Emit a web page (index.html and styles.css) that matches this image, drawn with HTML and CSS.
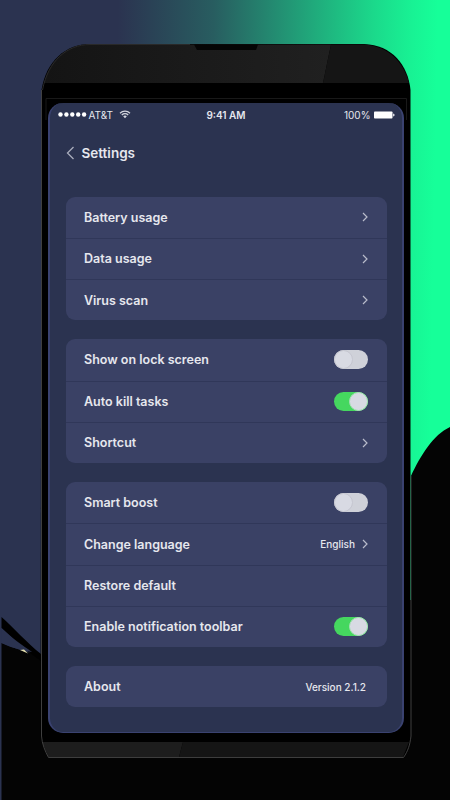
FILE: index.html
```html
<!DOCTYPE html>
<html lang="en">
  <head>
    <meta charset="utf-8" />
    <title>Settings</title>
    <link rel="stylesheet" href="styles.css" />
  </head>
  <body>
    <div class="stage">
      <!-- backdrop and phone body -->
      <svg class="backdrop" width="450" height="800" viewBox="0 0 450 800">
        <defs>
          <linearGradient id="glow" gradientUnits="userSpaceOnUse" x1="118" y1="0" x2="438" y2="6">
            <stop offset="0" stop-color="#2b3350" />
            <stop offset="0.3" stop-color="#285d60" />
            <stop offset="0.5" stop-color="#238e72" />
            <stop offset="0.8" stop-color="#1bd98b" />
            <stop offset="0.92" stop-color="#18f294" />
            <stop offset="1" stop-color="#16ff99" />
          </linearGradient>
          <linearGradient id="top" gradientUnits="userSpaceOnUse" x1="42" y1="0" x2="330" y2="0">
            <stop offset="0" stop-color="#141414" />
            <stop offset="1" stop-color="#202020" />
          </linearGradient>
        </defs>
        <rect width="450" height="800" fill="url(#glow)" />
        <path d="M1.5 643C14 648 28 653 41 655V600H411V476C421 455 433 435 450 427V800H1.5Z" fill="#040404" />
        <path d="M1.5 617C13 627 27 643 41 654V661C26 651 12 638 1.5 628Z" fill="#000" />
        <path d="M1.5 628C12 638 22 645 32 652L22 650C14 648 7 646 1.5 643Z" fill="#2b3350" />
        <path d="M20 650L28 653.5L24 649.5Z" fill="#e6e2b0" />
        <path d="M41.5 90C46 61 66 44 90 44H364C392 45 408 65 410.500 90V736C410 745 407 751 403 757.500H48.500C45 751 41.500 744 40.500 736Z" fill="#000" />
        <path d="M44 83C50 58 68 44.500 90 44.500H331L323 83Z" fill="url(#top)" />
        <path d="M331 44.500H364C389 46 404 63 409 83H323Z" fill="#151515" />
        <path d="M323 83H331L331 44.500L320 98H310Z" fill="#0c0c0c" opacity="0" />
        <path d="M46 120V98.500H406.500V120" fill="none" stroke="#191919" />
        <path d="M194 44.500H258L256 50H197Z" fill="#050505" />
        <path d="M42 742H183L179 757H48.500Z" fill="#1d1d1d" />
        <path d="M183 742H409L403 757H179Z" fill="#151515" />
        <path d="M41.500 90V736C42 744 45 751 48.500 757.500H403.500C408 751 410 745 411 736V476" fill="none" stroke="#454545" stroke-width="0.900" />
        <path d="M42.500 90C48 61 67 44.500 90 44.500H190" fill="none" stroke="#292929" />
      </svg>

      <main class="screen">
        <header class="status">
          <div class="carrier">
            <svg width="29" height="5" viewBox="0 0 29 5" fill="#fff">
              <circle cx="2.500" cy="2.500" r="2.200" />
              <circle cx="8.400" cy="2.500" r="2.200" />
              <circle cx="14.300" cy="2.500" r="2.200" />
              <circle cx="20.200" cy="2.500" r="2.200" />
              <circle cx="26.100" cy="2.500" r="2.200" />
            </svg>
            <span class="network">AT&amp;T</span>
            <svg class="wifi" width="12" height="9" viewBox="0 0 12 9" fill="none" stroke="#d4d6df" stroke-width="1.300">
              <path d="M1 3.200C3.800 0.500 8.200 0.500 11 3.200M2.800 5C4.600 3.300 7.400 3.300 9.200 5" />
              <path d="M6 8.200L4.200 6.200C5.200 5.300 6.800 5.300 7.800 6.200Z" fill="#d4d6df" stroke="none" />
            </svg>
          </div>
          <span class="clock">9:41 AM</span>
          <div class="power">
            <span>100%</span>
            <svg width="21" height="8" viewBox="0 0 21 8" fill="#fff">
              <rect x="0" y="0.500" width="18.500" height="7" rx="0.800" />
              <path d="M19.200 2.500C21 3 21 5 19.200 5.500Z" />
            </svg>
          </div>
        </header>

        <div class="title">
          <svg width="9" height="14" viewBox="0 0 9 14"><path d="M7.500 1L1.500 7L7.500 13" /></svg>
          <h1>Settings</h1>
        </div>

        <section class="card">
          <div class="row">
            <span class="label">Battery usage</span>
            <svg class="arrow" width="6" height="10" viewBox="0 0 6 10"><path d="M1 1L5 5L1 9" /></svg>
          </div>
          <div class="row">
            <span class="label">Data usage</span>
            <svg class="arrow" width="6" height="10" viewBox="0 0 6 10"><path d="M1 1L5 5L1 9" /></svg>
          </div>
          <div class="row low">
            <span class="label">Virus scan</span>
            <svg class="arrow" width="6" height="10" viewBox="0 0 6 10"><path d="M1 1L5 5L1 9" /></svg>
          </div>
        </section>

        <section class="card">
          <div class="row">
            <span class="label">Show on lock screen</span>
            <span class="toggle"></span>
          </div>
          <div class="row">
            <span class="label">Auto kill tasks</span>
            <span class="toggle on"></span>
          </div>
          <div class="row">
            <span class="label">Shortcut</span>
            <svg class="arrow" width="6" height="10" viewBox="0 0 6 10"><path d="M1 1L5 5L1 9" /></svg>
          </div>
        </section>

        <section class="card">
          <div class="row">
            <span class="label">Smart boost</span>
            <span class="toggle"></span>
          </div>
          <div class="row">
            <span class="label">Change language</span>
            <span class="value">English</span>
            <svg class="arrow" width="6" height="10" viewBox="0 0 6 10"><path d="M1 1L5 5L1 9" /></svg>
          </div>
          <div class="row">
            <span class="label">Restore default</span>
          </div>
          <div class="row">
            <span class="label">Enable notification toolbar</span>
            <span class="toggle on"></span>
          </div>
        </section>

        <section class="card">
          <div class="row">
            <span class="label">About</span>
            <span class="value version">Version 2.1.2</span>
          </div>
        </section>
      </main>
    </div>
  </body>
</html>
```
FILE: styles.css
```css
body {
  margin: 0;
  background: #2b3350;
  font-family: Inter, "Liberation Sans", sans-serif;
  color: #e6e7ee;
}

.stage {
  position: relative;
  box-sizing: border-box;
  width: 450px;
  height: 800px;
  padding: 103px 46px 67px 48px;
  overflow: hidden;
}

.backdrop {
  position: absolute;
  left: 0;
  top: 0;
}

.screen {
  position: relative;
  box-sizing: border-box;
  height: 630px;
  padding: 0 15.5px;
  border: solid #3a4270;
  border-width: 0 2px 1px 2px;
  border-radius: 15px;
  background: #2b3350;
}

.status {
  display: grid;
  grid-template-columns: 1fr auto 1fr;
  align-items: center;
  height: 23px;
  margin: 0 -8px;
  font-size: 10px;
  line-height: 12px;
}

.carrier,
.power {
  display: flex;
  align-items: center;
}

.network {
  margin-left: 2px;
}

.wifi {
  margin-left: 6px;
}

.clock {
  font-weight: 600;
}

.power {
  justify-content: flex-end;
  gap: 3px;
}

.title {
  display: flex;
  align-items: center;
  height: 54px;
  gap: 7px;
}

.title path {
  fill: none;
  stroke: #a9adbd;
  stroke-width: 1.3;
}

h1 {
  margin: 0;
  font-size: 13.5px;
  font-weight: 600;
}

.card {
  margin-bottom: 19px;
  border-radius: 9px;
  background: #3a4165;
}

.title + .card {
  margin-top: 16.5px;
}

.row {
  display: flex;
  align-items: center;
  box-sizing: border-box;
  height: 41.25px;
  padding: 0 18.5px;
}

.row + .row {
  border-top: 1px solid #303759;
}

.label {
  flex: 1;
  font-size: 12.5px;
  font-weight: 600;
}

.value {
  font-size: 10px;
  font-weight: 500;
  margin-right: 7px;
}

.version {
  margin-right: 2px;
}

.arrow path {
  fill: none;
  stroke: #b9bccb;
  stroke-width: 1.2;
}

.toggle {
  width: 34px;
  height: 19px;
  border-radius: 10px;
  background: #cfd1d9;
}

.toggle::before {
  content: "";
  display: block;
  box-sizing: border-box;
  width: 19px;
  height: 19px;
  border-radius: 50%;
  border: 1px solid #c5c6d0;
  background: #d8dae3;
}

.toggle.on {
  background: #45d75f;
}

.toggle.on::before {
  margin-left: 15px;
  border-color: #a9dfb8;
}
```
